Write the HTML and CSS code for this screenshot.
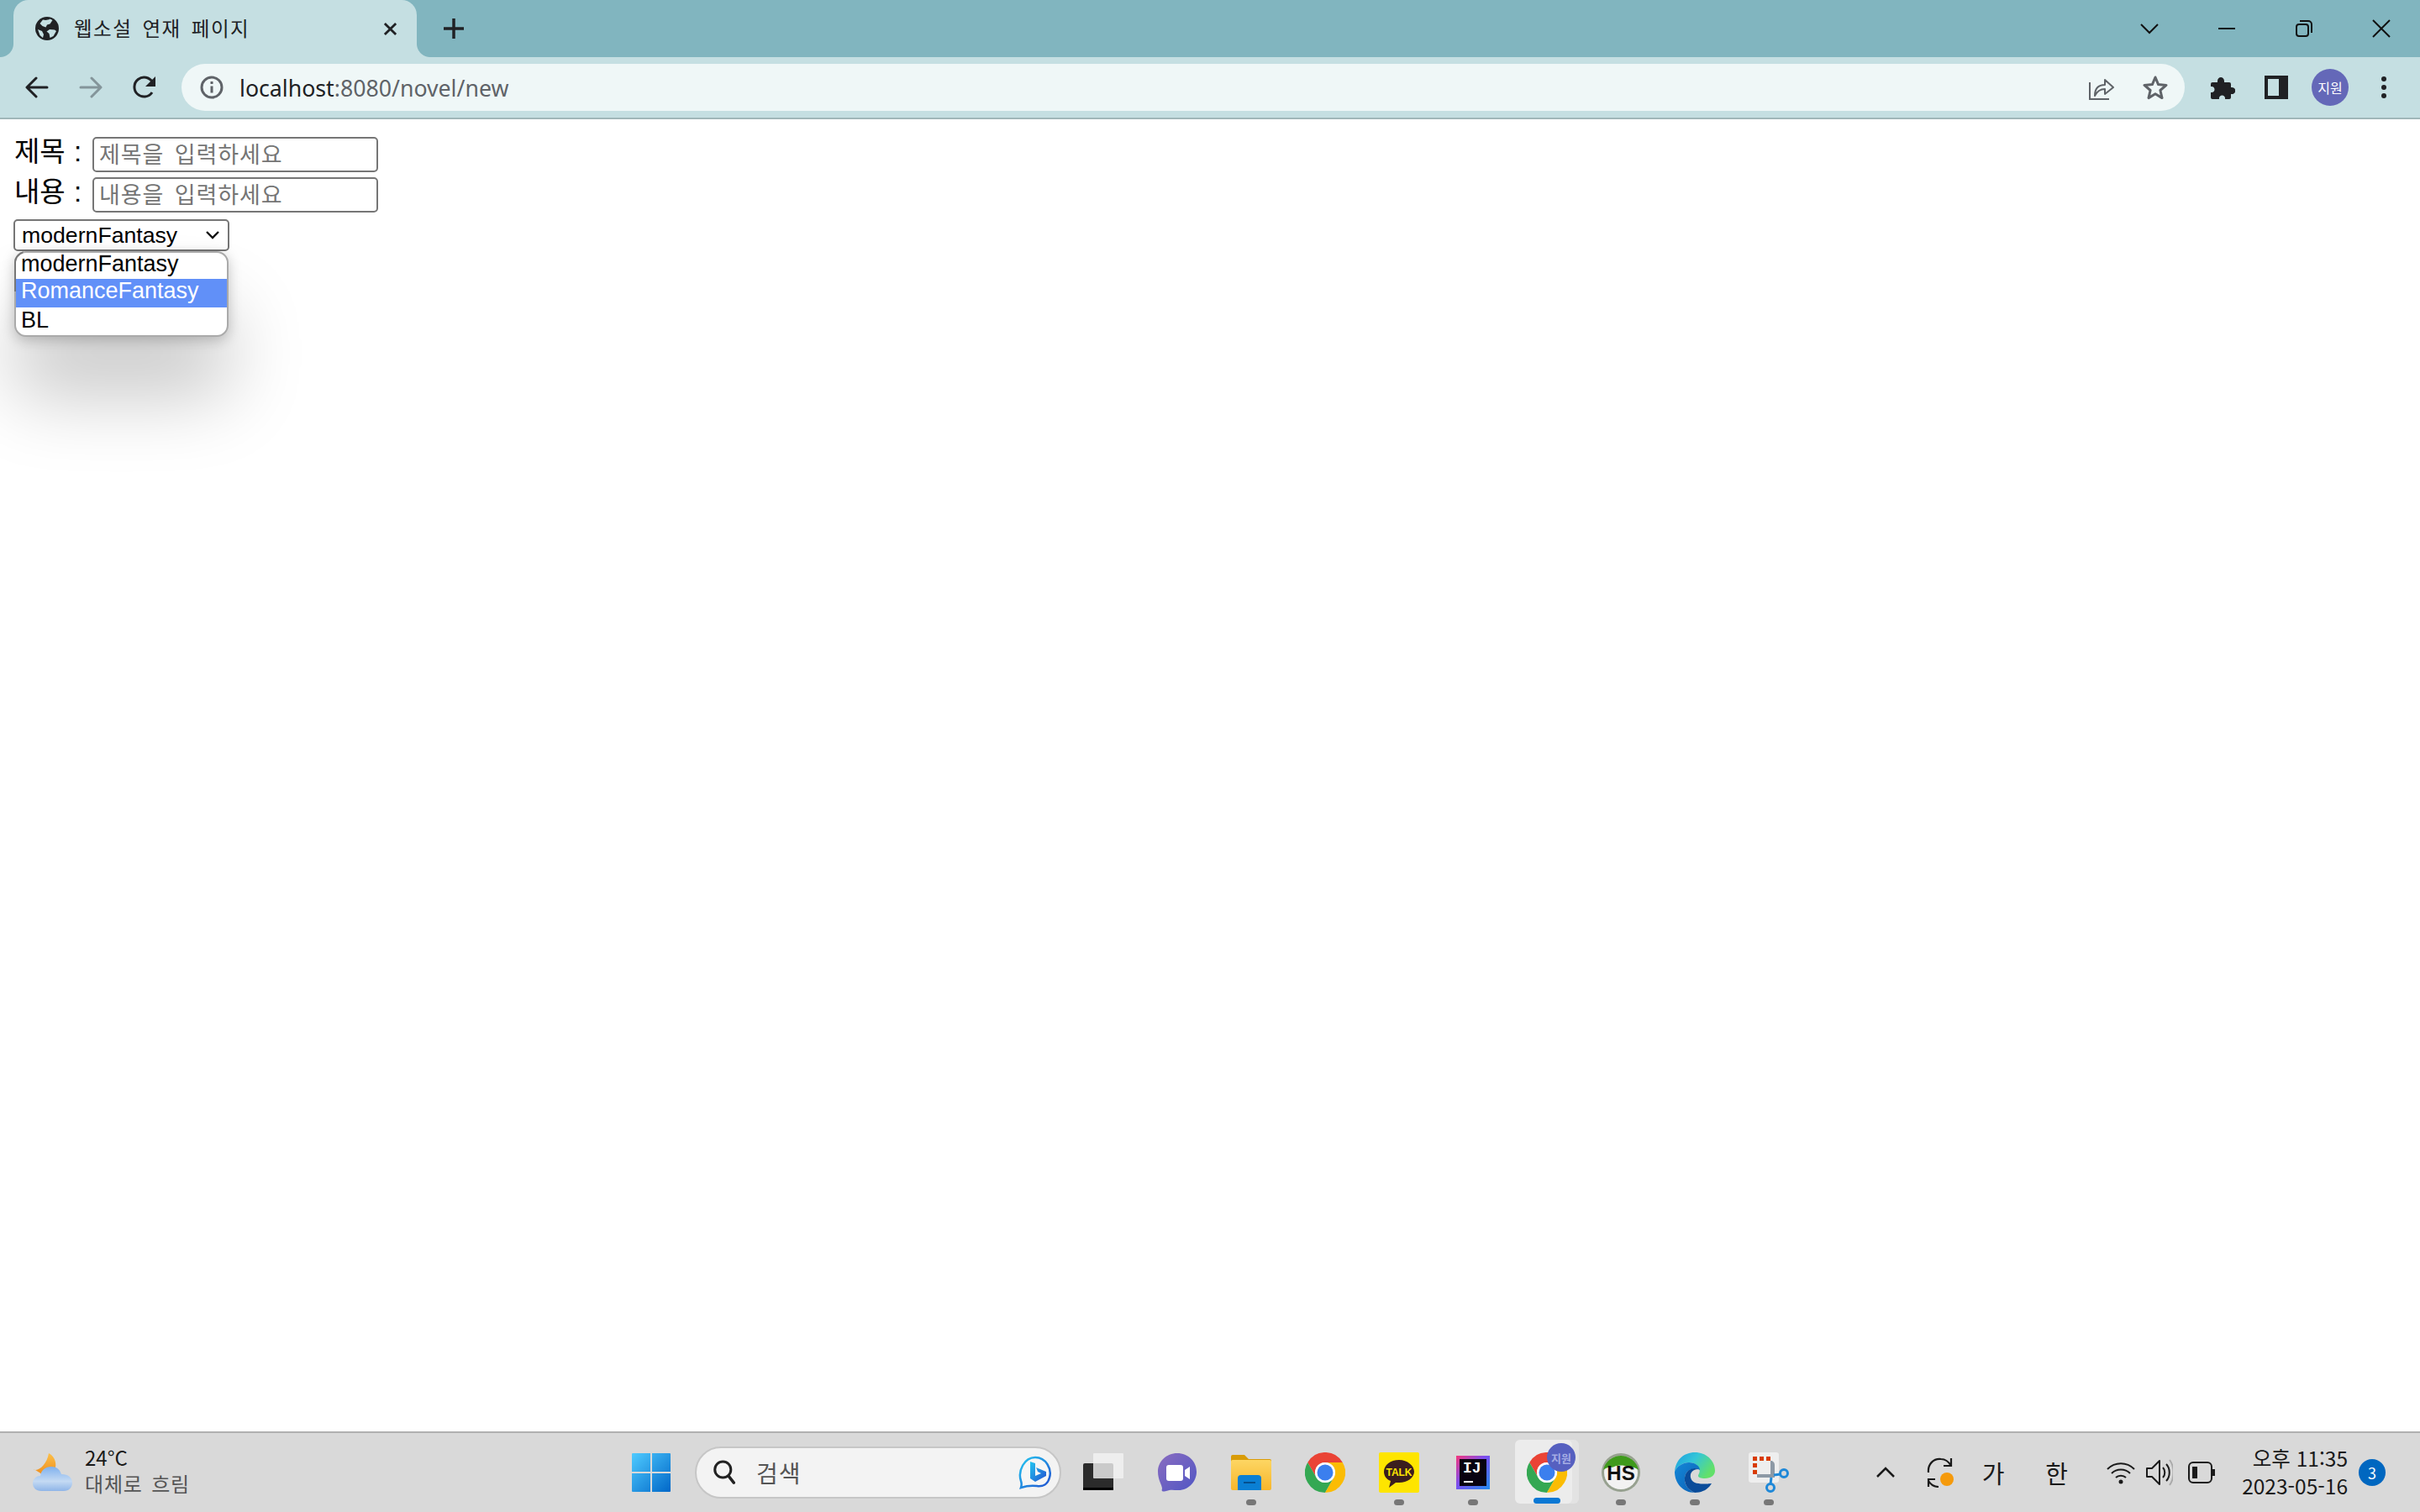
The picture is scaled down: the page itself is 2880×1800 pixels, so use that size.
FILE: index.html
```html
<!DOCTYPE html>
<html lang="ko">
<head>
    <meta charset="UTF-8">
    <title>웹소설 연재 페이지</title>
    <link rel="stylesheet" href="styles.css">
</head>
<body>
    <div class="tab-strip">
        <div class="tab">
            <svg class="favicon" viewBox="0 0 28 28"><circle cx="14" cy="14" r="14" fill="#202124"/><path d="M9 3.500c3 .8 6 .5 8.500-1l3 1.500-3 4.500-3.500 1-1.500 3-4-1.500-3-3zM17 15l6 .5 2 1.500-3.500 6-4 2-1-5-3-2.500zM3 15l5 2 2 4-1 4-3.500-3z" fill="#c5dfe2"/></svg>
            <span class="tab-title">웹소설 연재 페이지</span>
            <svg class="tab-close" viewBox="0 0 18 18"><path d="M2 2l14 14M16 2L2 16" stroke="#202124" stroke-width="3"/></svg>
        </div>
        <svg class="new-tab" viewBox="0 0 24 24"><path d="M12 0v24M0 12h24" stroke="#202124" stroke-width="3.500"/></svg>
        <div class="win-controls">
            <div class="win-btn"><svg width="22" height="14" viewBox="0 0 22 14"><path d="M1 2l10 10L21 2" fill="none" stroke="#111" stroke-width="2"/></svg></div>
            <div class="win-btn"><svg width="20" height="4" viewBox="0 0 20 4"><path d="M0 2h20" stroke="#111" stroke-width="2"/></svg></div>
            <div class="win-btn"><svg width="20" height="20" viewBox="0 0 20 20"><rect x="1" y="5" width="14" height="14" rx="3" fill="none" stroke="#111" stroke-width="2"/><path d="M5 1h10a4 4 0 0 1 4 4v10" fill="none" stroke="#111" stroke-width="2"/></svg></div>
            <div class="win-btn"><svg width="22" height="22" viewBox="0 0 22 22"><path d="M1 1l20 20M21 1L1 21" stroke="#111" stroke-width="2"/></svg></div>
        </div>
    </div>

    <div class="toolbar">
        <div class="tool-btn"><svg width="28" height="26" viewBox="0 0 28 26"><path d="M26 13H3M13 2L2 13l11 11" fill="none" stroke="#202124" stroke-width="3" stroke-linecap="round" stroke-linejoin="round"/></svg></div>
        <div class="tool-btn"><svg width="28" height="26" viewBox="0 0 28 26"><path d="M2 13h23M15 2l11 11-11 11" fill="none" stroke="#84959a" stroke-width="3" stroke-linecap="round" stroke-linejoin="round"/></svg></div>
        <div class="tool-btn"><svg width="28" height="28" viewBox="0 0 28 28"><path d="M23 20a11.500 11.500 0 1 1 .5-12" fill="none" stroke="#202124" stroke-width="3"/><path d="M27 1v12H15z" fill="#202124"/></svg></div>
        <div class="url-bar">
            <svg class="info-icon" viewBox="0 0 28 28"><circle cx="14" cy="14" r="12" fill="none" stroke="#5f6368" stroke-width="3"/><path d="M14 12.500v8M14 7v3" stroke="#5f6368" stroke-width="3"/></svg>
            <span class="url-text"><span class="url-host">localhost</span>:8080/novel/new</span>
            <svg class="share-icon" viewBox="0 0 30 30"><path d="M1 9v20h23" fill="none" stroke="#5f6368" stroke-width="2"/><path d="M7 25c0-8 4-13 12-13V6l10 9-10 8v-6c-5 0-9 2-12 8z" fill="none" stroke="#5f6368" stroke-width="2" stroke-linejoin="round"/></svg>
            <svg class="star-icon" viewBox="0 0 30 30"><path d="M15 3l3.600 8.600 9.400.8-7.100 6.100 2.100 9.100L15 22.800 7 27.600l2.100-9.100L2 12.400l9.400-.8z" fill="none" stroke="#5f6368" stroke-width="3" stroke-linejoin="round"/></svg>
        </div>
        <div class="tool-btn tool-first"><svg width="30" height="30" viewBox="0 0 30 30"><path d="M3 9h6c-1-8 9-8 8 0h6a2 2 0 0 1 2 2v4c7-1 7 9 0 8v4a2 2 0 0 1-2 2h-5c1-6-8-6-7 0H3a2 2 0 0 1-2-2v-6c6 1 6-8 0-7v-3a2 2 0 0 1 2-2z" fill="#202124"/></svg></div>
        <div class="tool-btn"><svg width="28" height="28" viewBox="0 0 28 28"><path fill-rule="evenodd" d="M0 0h28v28H0zM4 4v20h13V4z" fill="#202124"/></svg></div>
        <div class="tool-btn"><div class="avatar">지원</div></div>
        <div class="tool-btn"><svg width="8" height="28" viewBox="0 0 8 28"><circle cx="4" cy="4" r="3" fill="#202124"/><circle cx="4" cy="14" r="3" fill="#202124"/><circle cx="4" cy="24" r="3" fill="#202124"/></svg></div>
    </div>

    <main class="page">
        <div class="form-row">
            <label class="form-label" for="title">제목 :</label>
            <input class="form-input" id="title" type="text" placeholder="제목을 입력하세요">
        </div>
        <div class="form-row">
            <label class="form-label" for="content">내용 :</label>
            <input class="form-input" id="content" type="text" placeholder="내용을 입력하세요">
        </div>
        <div class="select-box">
            <span>modernFantasy</span>
            <svg width="16" height="10" viewBox="0 0 16 10"><path d="M1 1l7 7 7-7" fill="none" stroke="#111" stroke-width="2.400"/></svg>
        </div>
        <div class="select-popup">
            <div class="option option-first">modernFantasy</div>
            <div class="option option-active">RomanceFantasy</div>
            <div class="option option-last">BL</div>
        </div>
    </main>

    <footer class="taskbar">
        <div class="weather">
            <svg class="weather-icon" viewBox="0 0 48 46">
                <defs>
                    <linearGradient id="moon" x1="0" y1="0" x2="0" y2="1"><stop offset="0" stop-color="#fbc04a"/><stop offset="1" stop-color="#ef8d1c"/></linearGradient>
                    <linearGradient id="cloud" x1="0" y1="0" x2="0" y2="1"><stop offset="0" stop-color="#7fb1ee"/><stop offset=".6" stop-color="#c4daf3"/><stop offset="1" stop-color="#8fb5e8"/></linearGradient>
                </defs>
                <path d="M19 0c8 4 10 14 7 20-4 6-12 8-15 5-4-2-8-6-10-5 8 1 16-8 18-20z" fill="url(#moon)"/>
                <path d="M10 45C4 45 0 41 0 36c0-6 5-9 9-9 1-7 6-11 13-11 6 0 10 3 12 9 8 0 13 4 13 10 0 6-4 10-10 10z" fill="url(#cloud)"/>
            </svg>
            <div class="weather-text">
                <div class="weather-temp">24°C</div>
                <div class="weather-desc">대체로 흐림</div>
            </div>
        </div>
        <svg class="start-icon" viewBox="0 0 46 46">
            <defs><linearGradient id="win" x1="0" y1="0" x2="1" y2="1"><stop offset="0" stop-color="#4fcbff"/><stop offset="1" stop-color="#0067c8"/></linearGradient></defs>
            <path d="M1 0h21v22H0V1a1 1 0 0 1 1-1zM24 0h21a1 1 0 0 1 1 1v21H24zM0 24h22v22H1a1 1 0 0 1-1-1zM24 24h22v21a1 1 0 0 1-1 1H24z" fill="url(#win)"/>
        </svg>
        <div class="search-pill">
            <svg class="search-icon" viewBox="0 0 30 34"><circle cx="13" cy="13" r="11" fill="none" stroke="#222" stroke-width="3.500"/><path d="M21 22l7 9" stroke="#222" stroke-width="4" stroke-linecap="round"/></svg>
            <span class="search-text">검색</span>
            <svg class="bing-icon" viewBox="0 0 40 40">
                <defs><linearGradient id="bing" x1="0" y1="0" x2="1" y2="1"><stop offset="0" stop-color="#24c6f0"/><stop offset="1" stop-color="#2050d0"/></linearGradient></defs>
                <path d="M3 38c1-3 1-5 0-8-4-12 4-28 17-28s20 14 17 24c-2 8-8 11-15 10-7-1-13 0-19 2z" fill="#f6f6f6" stroke="url(#bing)" stroke-width="2.500"/>
                <path d="M14 7l6 2v15l7-3-4-2-2-5 12 5v5l-13 7-6-4z" fill="url(#bing)"/>
            </svg>
        </div>
        <div class="task-apps">
            <div class="app">
                <svg width="48" height="46" viewBox="0 0 48 46"><rect x="0" y="12" width="36" height="32" rx="2" fill="#2b2b2b"/><rect x="0" y="41" width="36" height="3" fill="#000"/><rect x="12" y="0" width="36" height="30" rx="1" fill="#f3f3f3" fill-opacity=".8"/></svg>
            </div>
            <div class="app">
                <svg width="46" height="46" viewBox="0 0 46 46"><defs><linearGradient id="meet" x1="0" y1="0" x2="1" y2="1"><stop offset="0" stop-color="#8a6cc0"/><stop offset="1" stop-color="#5056c4"/></linearGradient></defs><path d="M23 0c13 0 23 10 23 22s-10 23-23 22c-4 0-8-1-13 1-5 1-6 1-5-3 0-4-5-10-5-20C0 10 10 0 23 0z" fill="url(#meet)"/><rect x="10" y="14" width="20" height="19" rx="3" fill="#fff"/><path d="M32 20l6-4v15l-6-4z" fill="#fff"/></svg>
            </div>
            <div class="app">
                <svg width="48" height="42" viewBox="0 0 48 42"><defs><linearGradient id="folder" x1="0" y1="0" x2="0" y2="1"><stop offset="0" stop-color="#fdd663"/><stop offset="1" stop-color="#f7b62c"/></linearGradient></defs><path d="M2 0h14l5 5h25a2 2 0 0 1 2 2v4H0V2a2 2 0 0 1 2-2z" fill="#d99c08"/><rect x="0" y="6" width="48" height="36" rx="2" fill="url(#folder)"/><path d="M12 24h20a4 4 0 0 1 4 4v14H8V28a4 4 0 0 1 4-4z" fill="#0a7fd4"/><path d="M15 33h14" stroke="#05508e" stroke-width="2"/></svg>
                <i class="app-dot"></i>
            </div>
            <div class="app">
                <svg width="48" height="48" viewBox="0 0 48 48"><path d="M24 12h20.800A24 24 0 0 0 3.200 12l10.400 18A12 12 0 0 1 24 12z" fill="#ea4335"/><path d="M3.200 12A24 24 0 0 0 24 48l10.400-18a12 12 0 0 1-20.800 0z" fill="#34a853"/><path d="M24 12h20.800A24 24 0 0 1 24 48l10.400-18A12 12 0 0 0 24 12z" fill="#fbbc04"/><circle cx="24" cy="24" r="12" fill="#fff"/><circle cx="24" cy="24" r="9.500" fill="#3b7fee"/></svg>
            </div>
            <div class="app">
                <svg width="48" height="48" viewBox="0 0 48 48"><rect width="48" height="48" rx="2" fill="#fee500"/><path d="M24 9c-10 0-18 6-18 14 0 5 3 9 8 11l-2 8 8-6h4c10 0 18-6 18-13S34 9 24 9z" fill="#3b1e1e"/><text class="talk-text" x="24" y="28" text-anchor="middle">TALK</text></svg>
                <i class="app-dot"></i>
            </div>
            <div class="app">
                <svg width="40" height="40" viewBox="0 0 40 40"><defs><linearGradient id="ij" x1="0" y1="0" x2="1" y2="1"><stop offset="0" stop-color="#f5377c"/><stop offset=".45" stop-color="#7b4ff0"/><stop offset="1" stop-color="#1f8cf0"/></linearGradient></defs><rect width="40" height="40" fill="url(#ij)"/><rect x="4" y="4" width="32" height="32" fill="#080210"/><text class="ij-text" x="8" y="20">IJ</text><path d="M9 31h11" stroke="#fff" stroke-width="2"/></svg>
                <i class="app-dot"></i>
            </div>
            <div class="app app-active">
                <div class="active-bg"></div>
                <svg class="active-chrome" width="48" height="48" viewBox="0 0 48 48"><path d="M24 12h20.800A24 24 0 0 0 3.200 12l10.400 18A12 12 0 0 1 24 12z" fill="#ea4335"/><path d="M3.200 12A24 24 0 0 0 24 48l10.400-18a12 12 0 0 1-20.800 0z" fill="#34a853"/><path d="M24 12h20.800A24 24 0 0 1 24 48l10.400-18A12 12 0 0 0 24 12z" fill="#fbbc04"/><circle cx="24" cy="24" r="12" fill="#fff"/><circle cx="24" cy="24" r="9.500" fill="#3b7fee"/></svg>
                <div class="active-badge">지원</div>
                <i class="app-bar"></i>
            </div>
            <div class="app">
                <svg width="46" height="46" viewBox="0 0 46 46"><circle cx="23" cy="23" r="23" fill="#97a190"/><circle cx="23" cy="23" r="20" fill="#f2f2f2"/><path d="M2 20a21.500 21.500 0 0 1 42 0c-6-5-10-2-13-4-4-2-12-2-16 0-3 2-7-1-13 4z" fill="#3f9a1c"/><text class="hs-text" x="23" y="32" text-anchor="middle">HS</text></svg>
                <i class="app-dot"></i>
            </div>
            <div class="app">
                <svg width="48" height="48" viewBox="0 0 48 48"><defs><linearGradient id="edge1" x1="0" y1="0" x2="1" y2=".5"><stop offset="0" stop-color="#1a9de0"/><stop offset=".5" stop-color="#34c6d8"/><stop offset="1" stop-color="#62e06a"/></linearGradient><linearGradient id="edge2" x1="0" y1="0" x2="1" y2="1"><stop offset="0" stop-color="#1488d8"/><stop offset="1" stop-color="#0c5fb4"/></linearGradient></defs><path d="M0 23C1 9 11 0 24 0c14 0 24 10 24 22 0 6-6 9-12 9-5 0-8-1-8-3s3-4 1-9c-2-5-7-7-12-7-7 0-14 4-17 11z" fill="url(#edge1)"/><path d="M0 23c3-7 10-11 17-11 7 0 13 4 13 9-8-4-17 0-18 9-1 8 4 15 12 18C10 48 0 37 0 23z" fill="url(#edge2)"/><path d="M24 48c-8-3-13-10-12-18 1-9 10-13 16-10-7 0-10 5-9 10 2 8 11 8 25 7-4 7-11 11-20 11z" fill="#0a4c9a"/></svg>
                <i class="app-dot"></i>
            </div>
            <div class="app">
                <svg width="48" height="48" viewBox="0 0 48 48"><rect x="0" y="0" width="36" height="36" rx="3" fill="#eeeeee"/><path d="M5 5h5v5H5zM13 5h5v5h-5zM21 5h5v5h-5zM5 13h5v5H5zM5 21h5v5H5z" fill="#d83b01"/><path d="M26 10c3 0 5 2 5 5v15H10v-4h16z" fill="#8d99a5"/><path d="M30 27l8-1M27 30l-1 8" stroke="#1e88d8" stroke-width="3"/><circle cx="42" cy="25" r="4.500" fill="none" stroke="#1e88d8" stroke-width="3"/><circle cx="26" cy="42" r="4.500" fill="none" stroke="#1e88d8" stroke-width="3"/></svg>
                <i class="app-dot"></i>
            </div>
        </div>
        <div class="tray">
            <svg class="tray-up" viewBox="0 0 24 14"><path d="M2 12L12 2l10 10" fill="none" stroke="#1a1a1a" stroke-width="2.500"/></svg>
            <div class="tray-sync">
                <svg width="32" height="36" viewBox="0 0 32 36"><path d="M2 18C1 8 8 1 17 2c5 0 9 3 12 8M2 28c3 5 6 7 12 7" fill="none" stroke="#1a1a1a" stroke-width="2.200"/><path d="M29 1v9h-9M2 35v-9h8" fill="none" stroke="#1a1a1a" stroke-width="2.200"/></svg>
                <i class="sync-dot"></i>
            </div>
            <span class="tray-ime tray-ime-first">가</span>
            <span class="tray-ime">한</span>
            <svg class="tray-wifi" viewBox="0 0 34 28"><path d="M1 10c9-9 23-9 32 0M6 15c6-6 16-6 22 0M11 20c3-3 9-3 12 0" fill="none" stroke="#1a1a1a" stroke-width="2"/><circle cx="17" cy="25" r="2.500" fill="#1a1a1a"/></svg>
            <svg class="tray-sound" viewBox="0 0 32 34"><path d="M1 12h6l9-9v28l-9-9H1z" fill="none" stroke="#1a1a1a" stroke-width="2" stroke-linejoin="round"/><path d="M20 11c3 3 3 9 0 12M24 7c5 5 5 15 0 20" fill="none" stroke="#1a1a1a" stroke-width="2"/><path d="M28 2c6 8 6 22 0 30" fill="none" stroke="#aaa" stroke-width="2"/></svg>
            <svg class="tray-battery" viewBox="0 0 32 26"><rect x="1" y="1" width="27" height="24" rx="5" fill="none" stroke="#1a1a1a" stroke-width="2"/><rect x="5" y="6" width="6" height="14" fill="#1a1a1a"/><path d="M29 9h3v8h-3z" fill="#1a1a1a"/></svg>
            <div class="clock">
                <div>오후 11:35</div>
                <div>2023-05-16</div>
            </div>
            <div class="notif-badge">3</div>
        </div>
    </footer>
</body>
</html>
```

FILE: styles.css
```css
* {
    box-sizing: border-box;
}
html, body {
    margin: 0;
    height: 100%;
}
body {
    display: flex;
    flex-direction: column;
    height: 100vh;
    overflow: hidden;
    background-color: white;
    font-family: "Noto Sans CJK KR", "Noto Sans", sans-serif;
}

/* tab strip */
.tab-strip {
    display: flex;
    align-items: center;
    height: 68px;
    background-color: #81b5bf;
}
.tab {
    position: relative;
    display: flex;
    align-items: center;
    width: 480px;
    height: 68px;
    margin-left: 16px;
    padding: 0 23px 0 25px;
    background-color: #c5dfe2;
    border-radius: 18px 18px 0 0;
}
.tab::before, .tab::after {
    content: "";
    position: absolute;
    bottom: 0;
    width: 16px;
    height: 16px;
}
.tab::before {
    left: -16px;
    background: radial-gradient(circle at 0 0, #81b5bf 15.500px, #c5dfe2 16.500px);
}
.tab::after {
    right: -16px;
    background: radial-gradient(circle at 100% 0, #81b5bf 15.500px, #c5dfe2 16.500px);
}
.favicon {
    width: 30px;
    height: 28px;
}
.tab-title {
    margin-left: 17px;
    padding-bottom: 3px;
    font-size: 23.500px;
    letter-spacing: 1.500px;
    word-spacing: 4px;
    color: #202124;
    white-space: nowrap;
}
.tab-close {
    width: 17px;
    height: 17px;
    margin-left: auto;
}
.new-tab {
    width: 24px;
    height: 24px;
    margin-left: 32px;
}
.win-controls {
    display: flex;
    margin-left: auto;
}
.win-btn {
    display: flex;
    align-items: center;
    justify-content: center;
    width: 92px;
    height: 58px;
}

/* toolbar */
.toolbar {
    display: flex;
    align-items: center;
    height: 74px;
    padding: 8px 0 8px 12px;
    background-color: #c5dfe2;
    border-bottom: 2px solid #a0b7b9;
}
.tool-btn {
    display: flex;
    align-items: center;
    justify-content: center;
    width: 64px;
    height: 56px;
}
.url-bar {
    display: flex;
    align-items: center;
    width: 2384px;
    height: 56px;
    margin: 0 13px 0 12px;
    padding: 0 20px 0 22px;
    background-color: #eff7f7;
    border-radius: 28px;
}
.info-icon {
    width: 28px;
    height: 28px;
}
.url-text {
    margin-left: 19px;
    font-family: "Noto Sans", sans-serif;
    font-size: 26.700px;
    color: #5f6368;
}
.url-host {
    color: #202124;
}
.share-icon {
    width: 30px;
    height: 30px;
    margin-left: auto;
}
.star-icon {
    width: 30px;
    height: 30px;
    margin-left: 34px;
}
.avatar {
    display: flex;
    align-items: center;
    justify-content: center;
    width: 44px;
    height: 44px;
    border-radius: 50%;
    background-color: #6468b8;
    color: white;
    font-size: 16px;
}

/* page content */
.page {
    position: relative;
    flex: 1;
    padding: 21px 16px 0;
}
.form-row {
    display: flex;
    align-items: center;
    margin-bottom: 6px;
}
.form-label {
    width: 94px;
    padding: 0 0 6px 1px;
    font-family: "Liberation Sans", "Noto Sans CJK KR", sans-serif;
    font-size: 33px;
    line-height: 36px;
    word-spacing: 1px;
    color: black;
    white-space: pre;
}
.form-input {
    width: 340px;
    height: 42px;
    padding: 0 6px 4px;
    border: 2px solid #767676;
    border-radius: 5px;
    background-color: white;
    font-family: "Noto Sans CJK KR", sans-serif;
    font-size: 27px;
    letter-spacing: .9px;
    word-spacing: 4px;
}
.form-input::placeholder {
    color: #757575;
}
.select-box {
    display: flex;
    align-items: center;
    justify-content: space-between;
    width: 257px;
    height: 38px;
    margin-top: 8px;
    padding: 0 10px 0 8px;
    border: 2px solid #767676;
    border-radius: 5px;
    font-family: "Liberation Sans", Arial, sans-serif;
    font-size: 26.670px;
    color: black;
}
.select-popup {
    position: absolute;
    left: 17px;
    top: 157px;
    width: 255px;
    height: 102px;
    border: 2px solid #aaaaaa;
    border-radius: 14px;
    background-color: white;
    font-family: "Liberation Sans", Arial, sans-serif;
    font-size: 27px;
    box-shadow: 0 70px 90px rgba(0,0,0,0.22), 0 4px 16px rgba(0,0,0,0.22);
}
/* left edge of the closed control showing through behind the popup */
.select-popup::before {
    content: "";
    position: absolute;
    left: -2px;
    top: -2px;
    width: 16px;
    height: 46px;
    border-left: 2px solid #777777;
    border-top: 2px solid #777777;
    border-top-left-radius: 14px;
    clip-path: polygon(0 0, 60% 0, 12% 100%, 0 100%);
}
.option {
    padding-left: 6px;
    color: black;
}
.option-first {
    height: 31px;
    line-height: 27px;
}
.option-active {
    height: 34px;
    line-height: 29px;
    background-color: #6190f8;
    color: white;
}
.option-last {
    height: 33px;
    line-height: 31px;
}

/* taskbar */
.taskbar {
    display: flex;
    align-items: center;
    height: 96px;
    border-top: 2px solid #b0b0b0;
    background-color: #d9d9d9;
}
.weather {
    display: flex;
    align-items: center;
    width: 752px;
    padding-left: 39px;
}
.weather-icon {
    width: 48px;
    height: 46px;
}
.weather-text {
    margin: 0 0 6px 14px;
    font-size: 24px;
    line-height: 31px;
    word-spacing: 3px;
    letter-spacing: .8px;
}
.weather-temp {
    color: #1a1a1a;
    letter-spacing: 0;
}
.weather-desc {
    color: #555555;
}
.start-icon {
    width: 46px;
    height: 46px;
}
.search-pill {
    display: flex;
    align-items: center;
    width: 436px;
    height: 62px;
    margin-left: 29px;
    padding: 0 9px 0 20px;
    background-color: #f3f3f3;
    border: 2px solid #c6c6c6;
    border-radius: 31px;
}
.search-icon {
    width: 26px;
    height: 30px;
}
.search-text {
    margin-left: 25px;
    font-size: 28px;
    letter-spacing: 1px;
    color: #555555;
}
.bing-icon {
    width: 40px;
    height: 40px;
    margin-left: auto;
}
.task-apps {
    display: flex;
    margin-left: 6px;
}
.app {
    position: relative;
    display: flex;
    align-items: center;
    justify-content: center;
    width: 88px;
    height: 94px;
}
.app-dot {
    position: absolute;
    left: 38px;
    bottom: 8px;
    width: 12px;
    height: 7px;
    border-radius: 4px;
    background-color: #777777;
}
.talk-text {
    font-family: "Liberation Sans", sans-serif;
    font-size: 12px;
    font-weight: bold;
    fill: #fee500;
}
.ij-text {
    font-family: "Liberation Mono", monospace;
    font-size: 18px;
    font-weight: bold;
    fill: white;
}
.hs-text {
    font-family: "Liberation Sans", sans-serif;
    font-size: 24px;
    font-weight: bold;
    fill: #111111;
}
.active-bg {
    position: absolute;
    left: 6px;
    top: 8px;
    width: 68px;
    height: 76px;
    border-radius: 6px;
    background-color: #ececec;
    box-shadow: 8px 0 0 #e3e3e3;
}
.active-chrome {
    position: relative;
}
.active-badge {
    position: absolute;
    left: 44px;
    top: 12px;
    display: flex;
    align-items: center;
    justify-content: center;
    width: 34px;
    height: 34px;
    border-radius: 50%;
    background-color: #5660c0;
    color: #a4ace4;
    font-size: 13px;
    font-weight: bold;
}
.app-bar {
    position: absolute;
    left: 28px;
    bottom: 10px;
    width: 32px;
    height: 7px;
    border-radius: 4px;
    background-color: #0a78d4;
}
.tray {
    display: flex;
    align-items: center;
    margin-left: auto;
    padding-right: 41px;
}
.tray-up {
    width: 24px;
    height: 14px;
}
.tray-sync {
    position: relative;
    width: 32px;
    height: 36px;
    margin-left: 37px;
}
.sync-dot {
    position: absolute;
    left: 16px;
    top: 18px;
    width: 16px;
    height: 16px;
    border-radius: 50%;
    background-color: #f59a0c;
}
.tray-ime {
    font-size: 29px;
    line-height: 40px;
    color: #1a1a1a;
}
.tray-ime-first {
    margin-left: 34px;
}
.tray-ime + .tray-ime {
    margin-left: 49px;
}
.tray-wifi {
    width: 34px;
    height: 28px;
    margin-left: 46px;
}
.tray-sound {
    width: 32px;
    height: 34px;
    margin-left: 13px;
}
.tray-battery {
    width: 32px;
    height: 26px;
    margin-left: 18px;
}
.clock {
    width: 158px;
    text-align: right;
    font-size: 24.500px;
    line-height: 33px;
    padding-bottom: 2px;
    color: #1a1a1a;
}
.notif-badge {
    display: flex;
    align-items: center;
    justify-content: center;
    width: 32px;
    height: 32px;
    margin-left: 13px;
    border-radius: 50%;
    background-color: #0067c0;
    color: white;
    font-size: 18px;
}
```
